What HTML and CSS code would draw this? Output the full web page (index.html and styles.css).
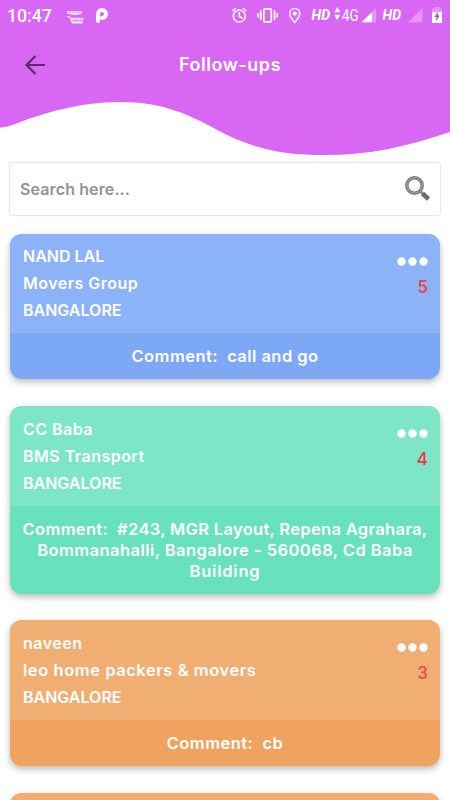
FILE: index.html
```html
<!DOCTYPE html>
<html lang="en">
<head>
<meta charset="utf-8">
<title>Follow-ups</title>
<link rel="stylesheet" href="styles.css">
</head>
<body>
<header class="hero">
  <svg class="wave" viewBox="0 0 450 160" aria-hidden="true"><path d="M0 0H450V132C405 147 370 155 325 155C285 155 258 150 225 134C190 115 165 102 119 102C80 102 40 114 18 123C10 126 5 127.5 0 127.5Z"/></svg>
  <div class="status">
    <span class="clock">10:47</span>
    <svg class="status-icons" viewBox="60 0 390 32" fill="#fff">
      <text x="67" y="13.5" font-size="5.6" font-weight="700" textLength="15" lengthAdjust="spacingAndGlyphs">amazon</text>
      <path d="M70 14.2q5 1.2 10-.4" fill="none" stroke="#fff" stroke-width=".8"/>
      <path d="M67 16.8h3l2 5.8h10" fill="none" stroke="#fff"/>
      <path d="M71 17.8h12.5l-1 5.7H72.5Z" fill-opacity=".8"/>
      <path d="M72 20.5h11M75 18v5M78 18v5M81 18v5" fill="none" stroke="#d868f4" stroke-width=".6"/>
      <path d="M98 21V14a4 4 0 1 1 4 4" fill="none" stroke="#fff" stroke-width="4" stroke-linecap="round"/>
      <g fill="none" stroke="#fff" stroke-width="1.600"><circle cx="239.300" cy="16" r="6"/><path d="M239.300 12v4.300l3.200 2M232.300 11l3.500-3M246.300 11l-3.500-3"/></g>
      <g fill="none" stroke="#fff" stroke-width="1.700"><rect x="263.900" y="8.800" width="7.400" height="13" rx="1"/><path d="M260.800 10.500v9.500M258.300 13v4.500M274.500 10.500v9.500M277 13v4.500"/></g>
      <path d="M294.700 8.600c-3 0-5 2.200-5 5 0 3.500 5 8.800 5 8.800s5-5.300 5-8.800c0-2.800-2-5-5-5Z" fill="none" stroke="#fff" stroke-width="1.500"/><circle cx="294.700" cy="13.600" r="2.100"/>
      <text class="hd" x="311.500" y="19.800" textLength="18.500" lengthAdjust="spacingAndGlyphs">HD</text>
      <path d="M337.300 7l3 5.200h-6ZM337.300 20.200l3-5.400h-6Z"/>
      <text class="net" x="342" y="20.600" textLength="16.500" lengthAdjust="spacingAndGlyphs">4G</text>
      <path d="M361.700 22.300L376 8v14.300Z" fill-opacity=".3"/><path d="M361.700 22.300L372 12v10.300Z"/>
      <text class="hd" x="382.500" y="19.800" textLength="18.500" lengthAdjust="spacingAndGlyphs">HD</text>
      <path d="M408 22.300L422.500 8v14.300Z" fill-opacity=".3"/>
      <path d="M434.500 7h5v1.700h2.500V12H432V8.700h2.500Z" fill-opacity=".3"/>
      <path d="M432 12h10v11H432Z"/><path d="M438.400 11.500l-4 5.500h2.300l-.8 4.200 4-5.600h-2.300Z" fill="#a44bc0"/>
    </svg>
  </div>
  <div class="appbar">
    <svg class="back" viewBox="0 0 22 22"><path d="M21 11H2.500M11.500 2L2.500 11l9 9"/></svg>
    <h1>Follow-ups</h1>
  </div>
</header>
<main>
  <div class="search"><span>Search here...</span>
    <svg viewBox="0 0 28 28"><circle cx="10.500" cy="10.500" r="7.700" fill="none" stroke="#757575" stroke-width="3.400"/><circle cx="10.500" cy="10.500" r="7.700" fill="none" stroke="#959595" stroke-width="1.800"/><path d="M16 16l3 3" stroke="#888" stroke-width="2.500"/><path d="M18.500 18.500l6 5.500" stroke="#6b6b6b" stroke-width="4.600"/></svg>
  </div>
  <article class="card blue">
    <div class="info"><ul><li class="caps">NAND LAL</li><li>Movers Group</li><li class="caps">BANGALORE</li></ul><div class="side"><svg class="dots" viewBox="0 0 31 9"><circle cx="4.500" cy="4.500" r="4.200"/><circle cx="15.500" cy="4.500" r="4.200"/><circle cx="26.500" cy="4.500" r="4.200"/></svg><b>5</b></div></div>
    <p>Comment:&nbsp; call and go</p>
  </article>
  <article class="card green">
    <div class="info"><ul><li>CC Baba</li><li>BMS Transport</li><li class="caps">BANGALORE</li></ul><div class="side"><svg class="dots" viewBox="0 0 31 9"><circle cx="4.500" cy="4.500" r="4.200"/><circle cx="15.500" cy="4.500" r="4.200"/><circle cx="26.500" cy="4.500" r="4.200"/></svg><b>4</b></div></div>
    <p><span class="dense">Comment:&nbsp; #243, MGR Layout, Repena Agrahara,</span><br>Bommanahalli, Bangalore - 560068, Cd Baba<br><span class="loose">Building</span></p>
  </article>
  <article class="card orange">
    <div class="info"><ul><li>naveen</li><li class="wide">leo home packers &amp; movers</li><li class="caps">BANGALORE</li></ul><div class="side"><svg class="dots" viewBox="0 0 31 9"><circle cx="4.500" cy="4.500" r="4.200"/><circle cx="15.500" cy="4.500" r="4.200"/><circle cx="26.500" cy="4.500" r="4.200"/></svg><b>3</b></div></div>
    <p>Comment:&nbsp; cb</p>
  </article>
  <article class="card orange"><div class="info"></div></article>
</main>
</body>
</html>
```
FILE: styles.css
```css
* { box-sizing: border-box; margin: 0; padding: 0; }
body { display: flex; flex-direction: column; width: 450px; height: 800px; overflow: hidden; background: #fff; font-family: Inter, "Liberation Sans", sans-serif; font-weight: 600; font-size: 16px; }
.hero { position: relative; flex: none; height: 158.500px; }
.wave { position: absolute; inset: 0; width: 450px; height: 160px; fill: #d868f4; }
.status { position: relative; display: flex; height: 32px; color: #fff; font-family: Roboto, sans-serif; }
.clock { width: 60px; padding-left: 7px; font-size: 17.700px; font-weight: 500; line-height: 32px; }
.status-icons { width: 390px; height: 32px; }
.hd { font-size: 15px; font-weight: 700; font-style: italic; }
.net { font-size: 16px; font-weight: 400; }
.appbar { position: relative; display: grid; grid-template-columns: 80px 1fr 70px; height: 66px; align-items: center; color: #fff; }
.back { width: 22px; height: 22px; margin-left: 24px; fill: none; stroke: #5b2a68; stroke-width: 2.2; }
h1 { font-size: 18px; line-height: 22px; font-weight: 600; letter-spacing: .550px; text-align: center; }
main { flex: 1; min-height: 0; overflow: hidden; padding: 4px 10px 0; }
.search { display: flex; align-items: center; justify-content: space-between; height: 52.500px; padding: 0 8px 0 10px; border-radius: 2px; background: #fff; box-shadow: 0 0 2px rgba(0,0,0,.35); color: #939393; margin-bottom: 18.500px; letter-spacing: .120px; }
.search svg { width: 28px; height: 28px; }
.card { border-radius: 12px; overflow: hidden; color: #fff; box-shadow: 0 3px 7px rgba(0,0,0,.28); margin-bottom: 26.600px; }
.info { display: flex; justify-content: space-between; height: 99.800px; padding: 9.500px 12px 0 13px; }
.green .info { padding-top: 10px; }
ul { list-style: none; }
li { line-height: 27px; width: max-content; letter-spacing: .480px; }
.caps { letter-spacing: 0; }
.wide { font-size: 16.500px; letter-spacing: .550px; }
.dots { display: block; width: 31px; height: 9px; margin-top: 13.500px; fill: #fff; }
.side b { display: block; margin-top: 11px; text-align: right; font-size: 17px; font-weight: 500; line-height: 20px; color: #f5402f; }
.green b { color: #ef3340; }
.orange b { color: #fa414d; }
.card p { padding: 12.500px 0; line-height: 21px; text-align: center; font-size: 16.500px; letter-spacing: .450px; white-space: nowrap; }
.green p { padding: 13px 0 12px; }
.dense { letter-spacing: .330px; }
.loose { letter-spacing: .780px; }
.blue { background: #7da8f5; } .blue .info { background: #8cb2f8; }
.green { background: #68e2bc; } .green .info { background: #7ce6c6; }
.orange { background: #efa35f; } .orange .info { background: #f1ae73; }
```
